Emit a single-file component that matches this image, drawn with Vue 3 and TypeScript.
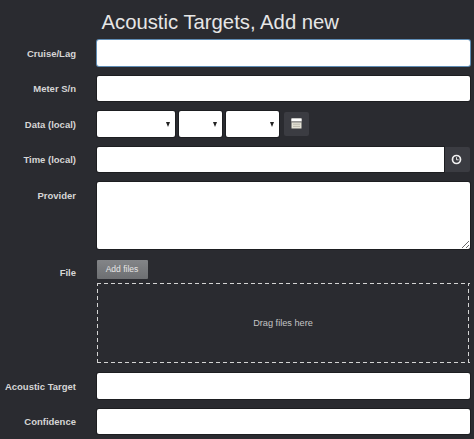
<script setup lang="ts">
const selects: string[] = ["year", "month", "day"];
</script>

<template>
  <main class="page">
    <h1 class="title">Acoustic Targets, Add new</h1>
    <form class="form" @submit.prevent>
      <label class="label">Cruise/Lag</label>
      <input class="field focused" type="text" />

      <label class="label">Meter S/n</label>
      <input class="field" type="text" />

      <label class="label">Data (local)</label>
      <div class="date">
        <span v-for="s in selects" :key="s" class="select" :class="s"></span>
        <button class="icon-btn" type="button" aria-label="Calendar">
          <svg width="11" height="11" viewBox="0 0 11 11">
            <path d="M.5.5h10v10H.5z" fill="#e4e2d6" />
            <path d="M.5.5h10v2.8H.5z" fill="#fff" />
            <path d="M.5 3.9h10" stroke="#3a3b41" stroke-width=".8" />
            <path d="M2 6.2h7M2 8.4h7" stroke="#a9a89c" stroke-width=".7" />
          </svg>
        </button>
      </div>

      <label class="label">Time (local)</label>
      <div class="time">
        <input class="field joined" type="text" />
        <button class="clock-btn" type="button" aria-label="Clock">
          <svg width="11" height="11" viewBox="0 0 11 11">
            <circle cx="5.5" cy="5.5" r="4" fill="none" stroke="#f1f1f1" stroke-width="1.7" />
            <path d="M5.5 3.2V5.8H7.6" fill="none" stroke="#f1f1f1" stroke-width=".9" />
          </svg>
        </button>
      </div>

      <label class="label provider-label">Provider</label>
      <div class="area-wrap">
        <textarea class="area"></textarea>
      </div>

      <label class="label file-label">File</label>
      <div class="files">
        <button class="add" type="button">Add files</button>
        <div class="drop">Drag files here</div>
      </div>

      <label class="label">Acoustic Target</label>
      <input class="field" type="text" />

      <label class="label">Confidence</label>
      <input class="field" type="text" />
    </form>
  </main>
</template>

<style>
html, body { margin: 0; background: #2a2b30; }
</style>

<style scoped>
.page {
  width: 474px;
  height: 439px;
  overflow: hidden;
  box-sizing: border-box;
  background: #2a2b30;
  font-family: "Liberation Sans", Arial, sans-serif;
  color: #e4e4e4;
}
.title {
  margin: 0;
  padding: 10px 0 0 101.5px;
  height: 40px;
  box-sizing: border-box;
  font-size: 20.3px;
  line-height: 24px;
  font-weight: 400;
  color: #e6e6e6;
}
.form {
  display: grid;
  grid-template-columns: 76px 373px;
  column-gap: 20.5px;
  row-gap: 10px;
  align-items: center;
}
.label {
  padding-top: 1px;
  text-align: right;
  font-size: 9.5px;
  font-weight: 700;
  color: #d6d6d6;
}
.field {
  display: block;
  width: 100%;
  height: 25.5px;
  box-sizing: border-box;
  border: 0;
  border-radius: 2px;
  background: #fff;
  padding: 0 8px;
  box-shadow: 0 0 0 1px #1d1e21;
}
.focused {
  box-shadow: 0 0 0 1px #5f8db5;
}
.date {
  display: flex;
  align-items: center;
  gap: 4px;
}
.select {
  position: relative;
  display: block;
  height: 25.5px;
  border-radius: 2px;
  background: #fff;
  box-shadow: 0 0 0 1px #1d1e21;
}
.select::after {
  content: "";
  position: absolute;
  right: 5px;
  top: 10.5px;
  border-left: 2.5px solid transparent;
  border-right: 2.5px solid transparent;
  border-top: 5px solid #222;
}
.year { width: 78px; }
.month { width: 43px; }
.day { width: 53px; }
.icon-btn {
  margin-left: 1px;
  width: 25.5px;
  height: 24px;
  padding: 0;
  border: 0;
  border-radius: 2px;
  background: #3b3c42;
  display: flex;
  align-items: center;
  justify-content: center;
}
.time {
  display: flex;
  align-items: stretch;
  gap: 1px;
}
.joined {
  flex: 1;
  border-radius: 2px 0 0 2px;
}
.clock-btn {
  width: 25px;
  padding: 0 1px 0 0;
  border: 0;
  border-radius: 0 2px 2px 0;
  background: #3b3c42;
  display: flex;
  align-items: center;
  justify-content: center;
}
.provider-label, .file-label {
  align-self: start;
}
.provider-label { padding-top: 8px; }
.file-label { padding-top: 8px; }
.area-wrap { display: flex; }
.area {
  width: 100%;
  height: 67px;
  box-sizing: border-box;
  border: 0;
  border-radius: 2px;
  background: #fff;
  padding: 6px 8px;
  resize: vertical;
  box-shadow: 0 0 0 1px #1d1e21;
}
.files {
  display: flex;
  flex-direction: column;
  gap: 4px;
}
.add {
  align-self: flex-start;
  margin-top: 1px;
  width: 51px;
  height: 19px;
  padding: 0 0 2px;
  border: 0;
  border-radius: 1px;
  background: linear-gradient(#838588, #6d6f72);
  color: #e6e6e6;
  font-family: inherit;
  font-size: 8.5px;
}
.drop {
  --dash: #d4d4d4;
  height: 80px;
  box-sizing: border-box;
  background-image:
    repeating-linear-gradient(90deg, var(--dash) 0 4px, transparent 4px 7px),
    repeating-linear-gradient(90deg, var(--dash) 0 4px, transparent 4px 7px),
    repeating-linear-gradient(0deg, var(--dash) 0 4px, transparent 4px 7px),
    repeating-linear-gradient(0deg, var(--dash) 0 4px, transparent 4px 7px);
  background-size: 100% 1.4px, 100% 1.4px, 1.4px 100%, 1.4px 100%;
  background-position: 0 0, 0 100%, 0 0, 100% 0;
  background-repeat: no-repeat;
  display: flex;
  align-items: center;
  justify-content: center;
  font-size: 9.2px;
  color: #c4c4c4;
}
</style>
